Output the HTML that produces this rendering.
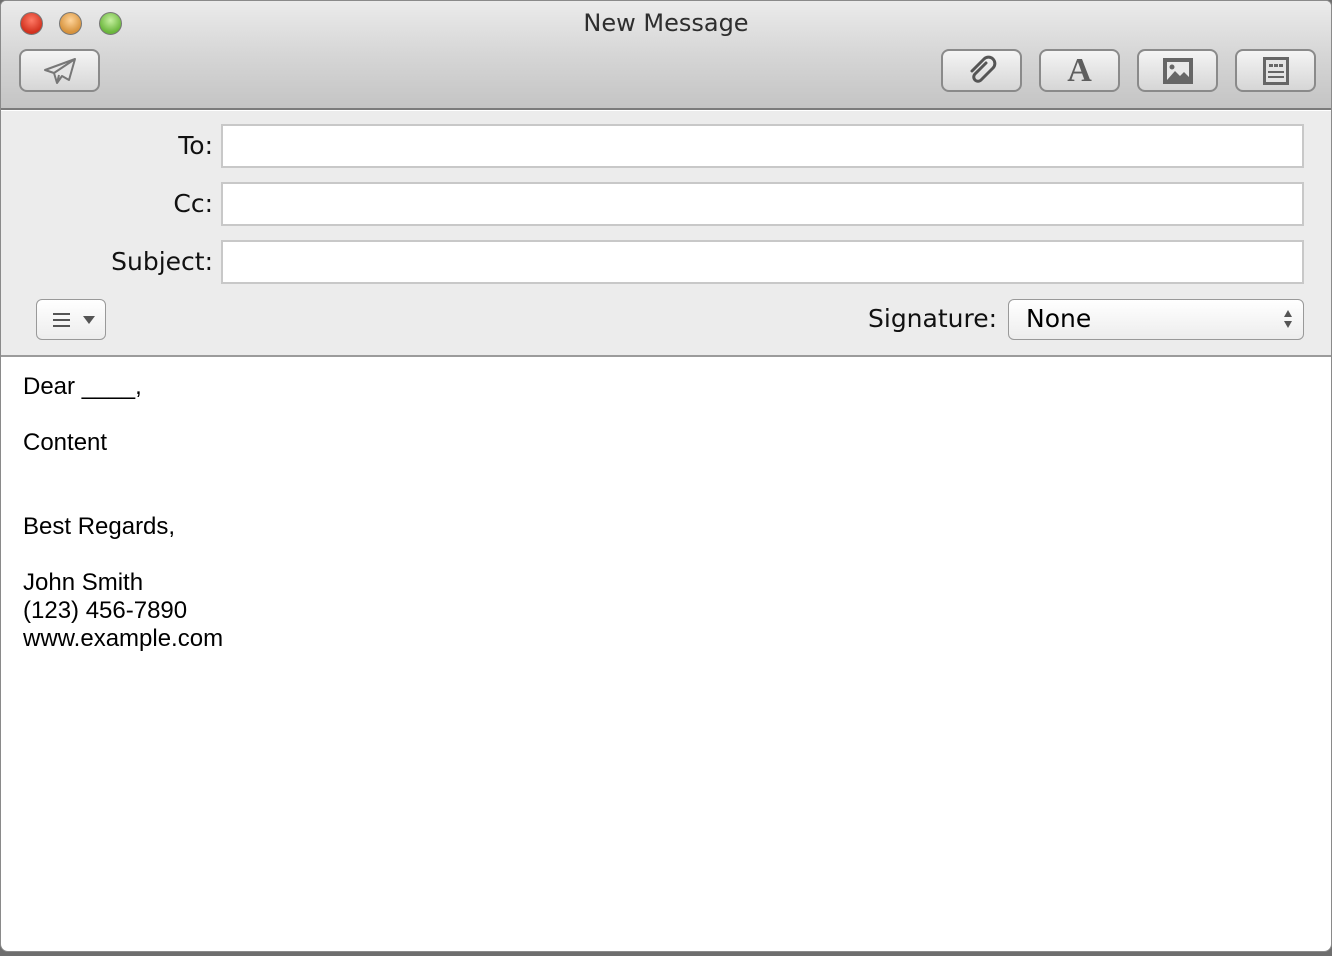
<!DOCTYPE html>
<html><head><style>
*{margin:0;padding:0;box-sizing:border-box}
body{width:1332px;height:956px;background:#6e6e6e;position:relative;overflow:hidden;font-family:"DejaVu Sans","Liberation Sans",sans-serif}
.win{position:absolute;left:0;top:0;width:1332px;height:952px;background:#fff;border-radius:6px 6px 8px 8px;overflow:hidden;border:1px solid #8a8a8a}
.tb{position:absolute;left:0;top:0;width:100%;height:109px;background:linear-gradient(#ebebeb,#d6d6d6 50%,#c4c4c4);border-bottom:2px solid #7b7b7b}
.title{position:absolute;top:8px;width:100%;text-align:center;font-size:24px;color:#2e2e2e}
.light{position:absolute;top:11px;width:23px;height:23px;border-radius:50%;border:1px solid #777}
.btn{position:absolute;top:48px;width:81px;height:43px;border:2px solid #8a8a8a;border-radius:8px;background:linear-gradient(#f4f4f4,#d6d6d6)}
.btn svg{position:absolute;left:50%;top:50%;transform:translate(-50%,-50%)}
.hdr{position:absolute;left:0;top:110px;width:100%;height:246px;background:#ececec;border-bottom:2px solid #9b9b9b}
.lbl{position:absolute;right:1118px;font-size:25px;color:#111;text-align:right}
.fld{position:absolute;left:220px;width:1083px;height:44px;background:#fff;border:2px solid #c8c8c8}
.body{position:absolute;left:22px;top:372px;font-family:"Liberation Sans",sans-serif;font-size:24px;line-height:28px;color:#000}
</style></head><body>
<div class="win">
<div class="tb">
<div class="light" style="left:19px;background:radial-gradient(circle at 50% 35%,#ff7a66,#d2311e 70%)"></div>
<div class="light" style="left:58px;background:radial-gradient(circle at 50% 35%,#ffd49a,#d6923c 70%)"></div>
<div class="light" style="left:98px;background:radial-gradient(circle at 50% 35%,#c6f0a0,#6ab63c 70%)"></div>
<div class="title">New Message</div>
<div class="btn" style="left:18px"><svg width="36" height="30" viewBox="0 0 36 30"><path d="M33 3 L3 14 L12 17 L15 27 L20 20 L27 24 Z M12 17 L33 3 M15 27 L17 19" fill="#e6e6e6" stroke="#777" stroke-width="2" stroke-linejoin="round"/></svg></div>
<div class="btn" style="left:940px"><svg width="32" height="32" viewBox="0 0 32 32"><path d="M20 8 L9 19 a4 4 0 0 0 6 6 L27 13 a6 6 0 0 0 -9 -9 L6 16" fill="none" stroke="#555" stroke-width="3" stroke-linecap="round"/></svg></div>
<div class="btn" style="left:1038px"><span style="position:absolute;left:0;width:100%;top:1px;text-align:center;font-family:'Liberation Serif',serif;font-weight:bold;font-size:34px;color:#5e5e5e">A</span></div>
<div class="btn" style="left:1136px"><svg width="32" height="28" viewBox="0 0 32 28"><rect x="1" y="1" width="30" height="26" fill="#666"/><rect x="5" y="5" width="22" height="18" fill="#e8e8e8"/><circle cx="10" cy="10" r="2.5" fill="#666"/><path d="M5 23 L13 14 L18 19 L22 15 L27 20 L27 23Z" fill="#666"/></svg></div>
<div class="btn" style="left:1234px"><svg width="28" height="30" viewBox="0 0 28 30"><rect x="1" y="1" width="26" height="28" fill="#666"/><rect x="4" y="4" width="20" height="22" fill="#e4e4e4"/><rect x="7" y="8" width="4" height="3" fill="#666"/><rect x="12" y="8" width="4" height="3" fill="#666"/><rect x="17" y="8" width="4" height="3" fill="#666"/><rect x="6" y="15" width="16" height="2" fill="#666"/><rect x="6" y="20" width="16" height="2" fill="#666"/></svg></div>
</div>
<div class="hdr">
<div class="lbl" style="top:20px">To:</div>
<div class="fld" style="top:13px"></div>
<div class="lbl" style="top:78px">Cc:</div>
<div class="fld" style="top:71px"></div>
<div class="lbl" style="top:136px">Subject:</div>
<div class="fld" style="top:129px"></div>
<div style="position:absolute;left:35px;top:188px;width:70px;height:41px;border:1px solid #999;border-radius:6px;background:linear-gradient(#fff,#ededed)"><div style="position:absolute;left:16px;top:13px;width:17px;height:2px;background:#555;box-shadow:0 6px 0 #555,0 12px 0 #555"></div><div style="position:absolute;left:46px;top:16px;border-left:6px solid transparent;border-right:6px solid transparent;border-top:8px solid #555"></div></div>
<div style="position:absolute;left:867px;top:193px;font-size:25px;color:#111">Signature:</div>
<div style="position:absolute;left:1007px;top:188px;width:296px;height:41px;border:1px solid #999;border-radius:6px;background:linear-gradient(#fff,#ededed)"><span style="position:absolute;left:17px;top:4px;font-size:25px;color:#000">None</span><div style="position:absolute;right:11px;top:10px;border-left:4px solid transparent;border-right:4px solid transparent;border-bottom:7px solid #555"></div><div style="position:absolute;right:11px;top:21px;border-left:4px solid transparent;border-right:4px solid transparent;border-top:7px solid #555"></div></div>
</div>
<div class="body">Dear ____,<br><br>Content<br><br><br>Best Regards,<br><br>John Smith<br>(123) 456-7890<br>www.example.com</div>
</div>
</body></html>
